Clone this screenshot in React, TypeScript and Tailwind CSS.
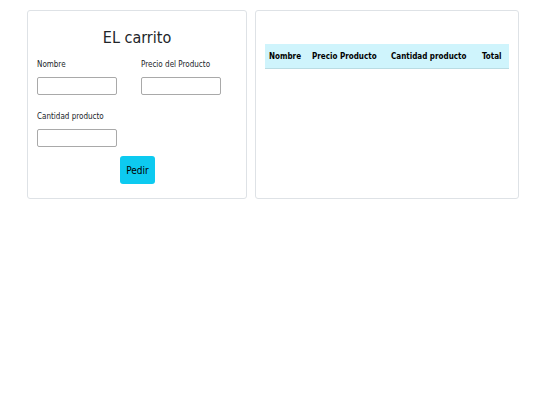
export default function App() {
  return (
    <div
      className="flex h-[405px] w-[540px] items-start gap-2 bg-white pl-[27px] pr-[21px] pt-[10px] text-[#212529]"
      style={{ fontFamily: '"DejaVu Sans Condensed", "DejaVu Sans", sans-serif' }}
    >
      <div className="flex h-[189px] w-[220px] flex-col rounded-[3px] border border-[#dee2e6] px-[9px]">
        <h1 className="mt-[16px] text-center text-[16px] leading-[22px]">EL carrito</h1>
        <div className="mt-[9px] grid grid-cols-[104px_1fr]">
          <div className="flex flex-col">
            <label className="text-[8px] leading-[14px]">Nombre</label>
            <input className="mt-[5px] h-[18px] w-[80px] rounded-[2px] border border-[#a9a9a9]" />
          </div>
          <div className="flex flex-col">
            <label className="text-[8px] leading-[14px]">Precio del Producto</label>
            <input className="mt-[5px] h-[18px] w-[80px] rounded-[2px] border border-[#a9a9a9]" />
          </div>
        </div>
        <div className="mt-[15px] flex flex-col">
          <label className="text-[8px] leading-[14px]">Cantidad producto</label>
          <input className="mt-[5px] h-[18px] w-[80px] rounded-[2px] border border-[#a9a9a9]" />
        </div>
        <div className="mt-[9px] flex justify-center">
          <button className="ml-[1px] h-[28px] w-[35px] rounded-[3px] bg-[#0dcaf0] text-[10px] text-[#000]">Pedir</button>
        </div>
      </div>
      <div className="h-[189px] flex-1 rounded-[3px] border border-[#dee2e6] px-[9px] pt-[33px]">
        <table className="w-full table-fixed border-collapse">
          <thead>
            <tr className="h-[24px] border-b border-[#badce3] bg-[#cff4fc] text-left text-[8px] font-bold text-black">
              <th className="w-[47px] pl-[4px] pt-[3px]">Nombre</th>
              <th className="w-[79px] pt-[3px]">Precio Producto</th>
              <th className="w-[91px] pt-[3px]">Cantidad producto</th>
              <th className="pt-[3px]">Total</th>
            </tr>
          </thead>
          <tbody></tbody>
        </table>
      </div>
    </div>
  );
}
